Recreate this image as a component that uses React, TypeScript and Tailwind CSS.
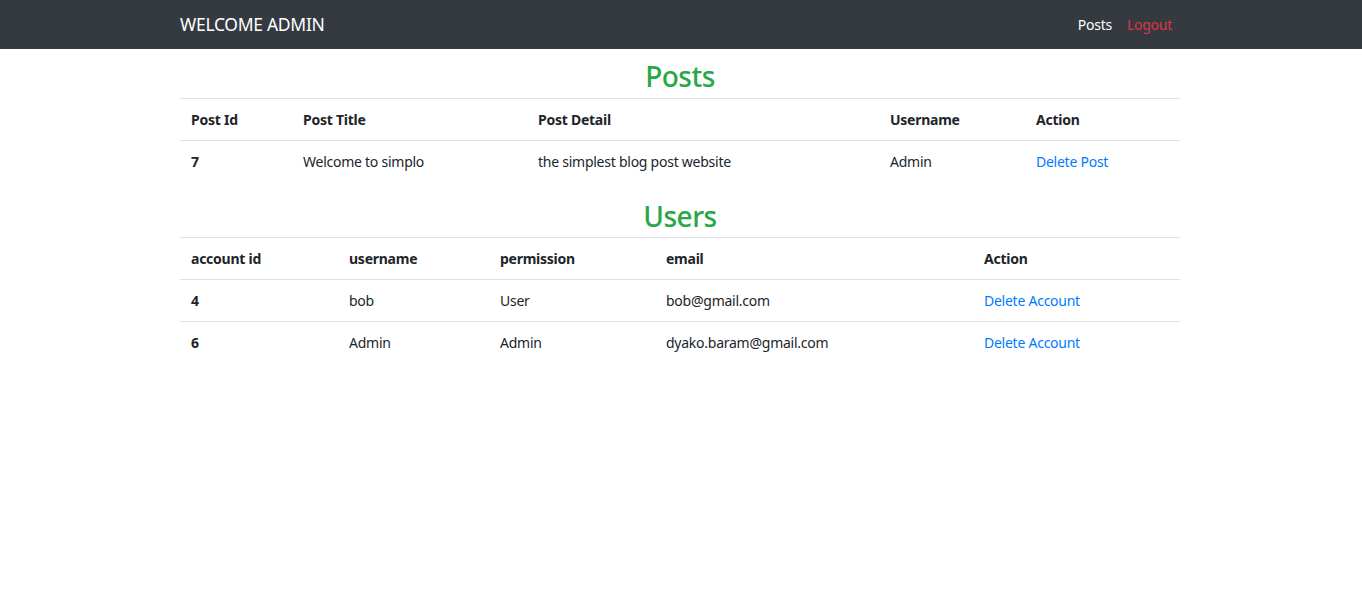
import React from "react";

const posts = [{ id: "7", title: "Welcome to simplo", detail: "the simplest blog post website", user: "Admin" }];
const users = [
  { id: "4", username: "bob", perm: "User", email: "bob@gmail.com" },
  { id: "6", username: "Admin", perm: "Admin", email: "dyako.baram@gmail.com" },
];

export default function App() {
  return (
    <div className="min-h-screen bg-white text-[#212529] text-[14px] tracking-[-0.25px]" style={{ fontFamily: '"Noto Sans", "Open Sans", sans-serif' }}>
      <nav className="bg-[#343a40] h-[49px]">
        <div className="w-[1002px] pr-[2px] mx-auto h-full flex items-center justify-between">
          <span className="text-white text-[17.5px] tracking-[-0.3px]">WELCOME ADMIN</span>
          <div className="flex items-center gap-[15px] pr-[8px] text-[14px]">
            <a className="text-white">Posts</a>
            <a className="text-[#dc3545]">Logout</a>
          </div>
        </div>
      </nav>
      <div className="w-[1002px] pr-[2px] mx-auto">
        <h2 className="text-center text-[#28a745] text-[28px] font-medium leading-[40px] mt-[7px] mb-[2px] tracking-[-0.5px]">Posts</h2>
        <table className="w-full table-fixed border-collapse">
          <colgroup>
            <col className="w-[112px]" />
            <col className="w-[235px]" />
            <col className="w-[352px]" />
            <col className="w-[146px]" />
            <col />
          </colgroup>
          <thead>
            <tr className="border-t border-[#dee2e6]">
              {["Post Id", "Post Title", "Post Detail", "Username", "Action"].map((h) => (
                <th key={h} className="text-left font-bold px-[11px] py-[10px] leading-[21px] border-b border-[#dee2e6]">{h}</th>
              ))}
            </tr>
          </thead>
          <tbody>
            {posts.map((p) => (
              <tr key={p.id}>
                <td className="font-bold px-[11px] py-[10px] leading-[21px]">{p.id}</td>
                <td className="px-[11px] py-[10px] leading-[21px]">{p.title}</td>
                <td className="px-[11px] py-[10px] leading-[21px]">{p.detail}</td>
                <td className="px-[11px] py-[10px] leading-[21px]">{p.user}</td>
                <td className="px-[11px] py-[10px] leading-[21px]"><a className="text-[#007bff]">Delete Post</a></td>
              </tr>
            ))}
          </tbody>
        </table>
        <h2 className="text-center text-[#28a745] text-[28px] font-medium leading-[40px] mt-[14px] mb-[1px] tracking-[-0.5px]">Users</h2>
        <table className="w-full table-fixed border-collapse">
          <colgroup>
            <col className="w-[158px]" />
            <col className="w-[151px]" />
            <col className="w-[166px]" />
            <col className="w-[318px]" />
            <col />
          </colgroup>
          <thead>
            <tr className="border-t border-[#dee2e6]">
              {["account id", "username", "permission", "email", "Action"].map((h) => (
                <th key={h} className="text-left font-bold px-[11px] py-[10px] leading-[21px] border-b border-[#dee2e6]">{h}</th>
              ))}
            </tr>
          </thead>
          <tbody>
            {users.map((u, i) => (
              <tr key={u.id} className={i > 0 ? "border-t border-[#dee2e6]" : ""}>
                <td className="font-bold px-[11px] py-[10px] leading-[21px]">{u.id}</td>
                <td className="px-[11px] py-[10px] leading-[21px]">{u.username}</td>
                <td className="px-[11px] py-[10px] leading-[21px]">{u.perm}</td>
                <td className="px-[11px] py-[10px] leading-[21px]">{u.email}</td>
                <td className="px-[11px] py-[10px] leading-[21px]"><a className="text-[#007bff]">Delete Account</a></td>
              </tr>
            ))}
          </tbody>
        </table>
      </div>
    </div>
  );
}
